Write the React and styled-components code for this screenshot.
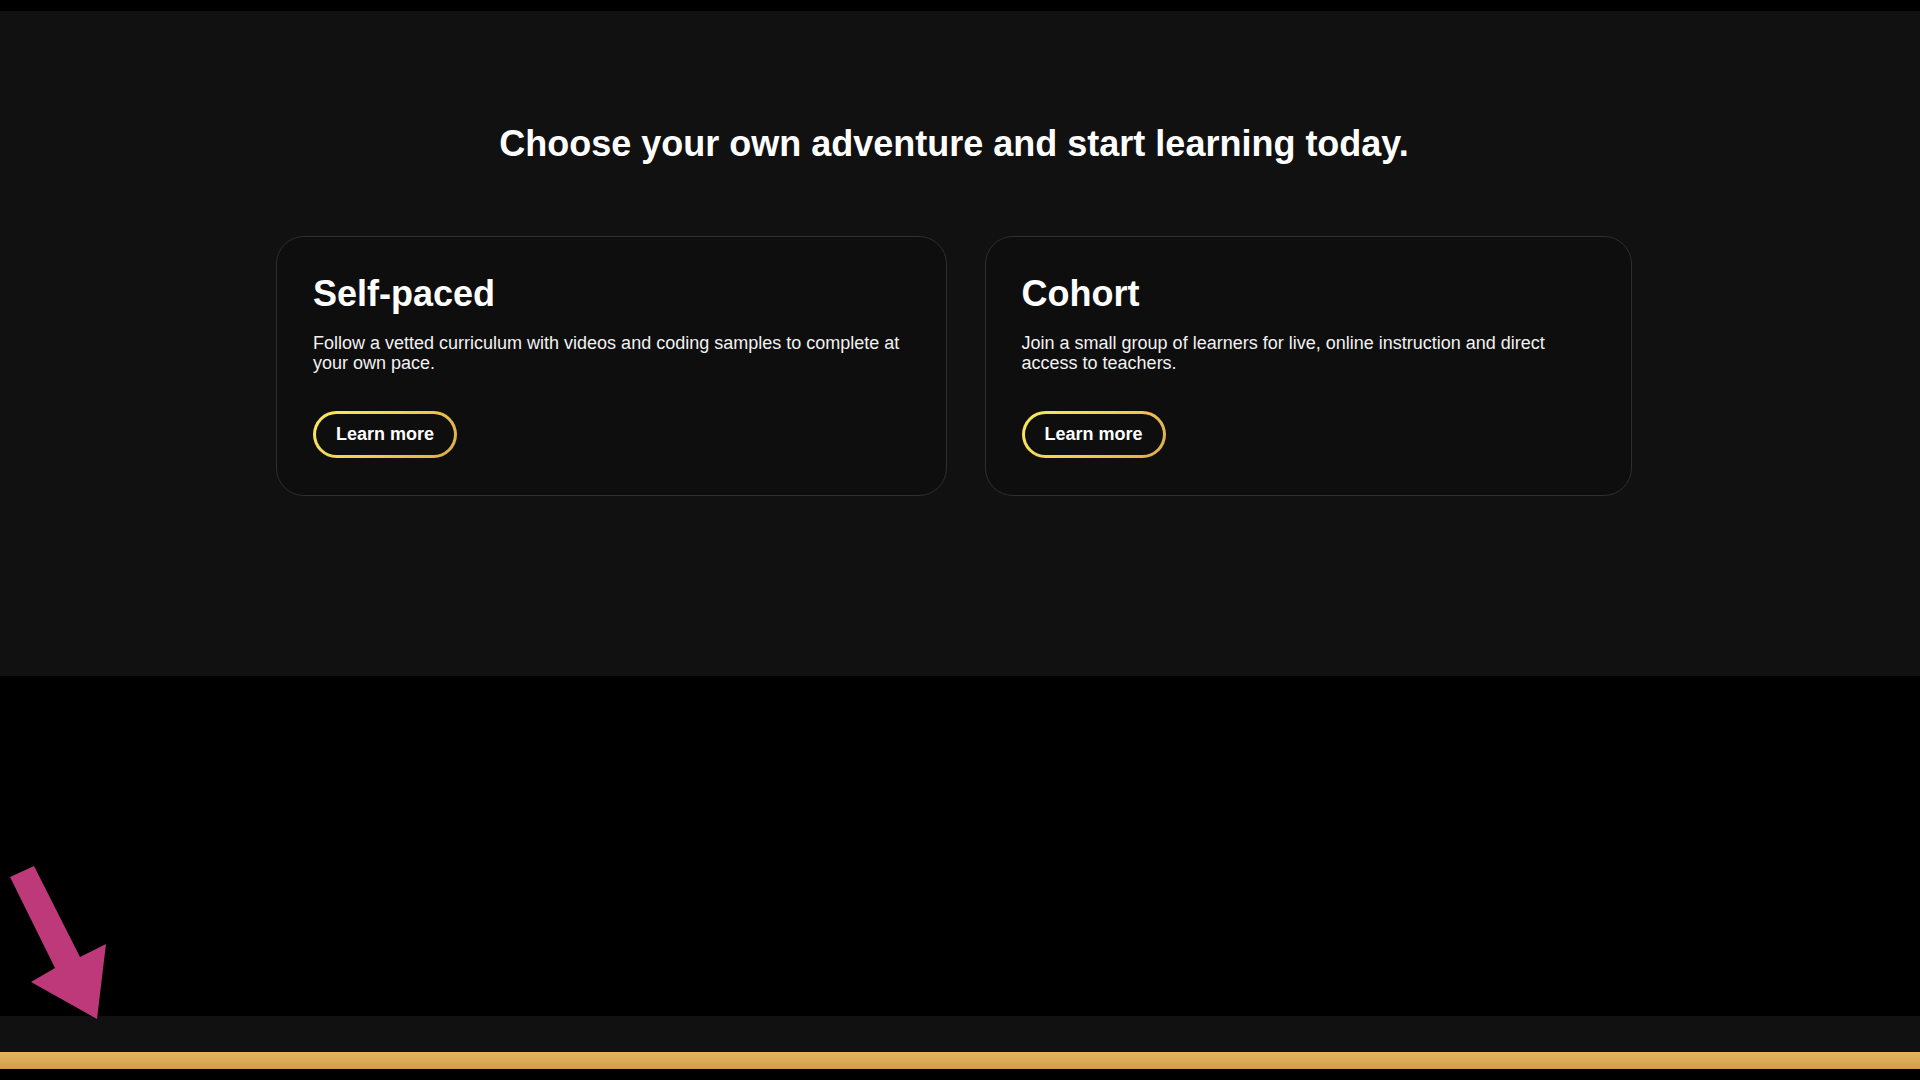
import React from "react";
import styled, { createGlobalStyle } from "styled-components";

const GlobalStyle = createGlobalStyle`
  html, body {
    margin: 0;
    padding: 0;
    background-color: #000;
  }

  body {
    font-family: "Liberation Sans", Helvetica, Arial, sans-serif;
    color: #fff;
  }
`;

const Page = styled.div`
  position: relative;
  height: 1080px;
  display: flex;
  flex-direction: column;
  overflow: hidden;
`;

const TopBar = styled.div`
  height: 11px;
  background-color: #000;
`;

const ChooseSection = styled.section`
  height: 665px;
  box-sizing: border-box;
  padding-top: 112px;
  background-color: #111;
`;

const Container = styled.div`
  width: 1356px;
  margin-left: calc(50% - 684px);
`;

const Heading = styled.h1`
  margin: 0 0 72px;
  text-align: center;
  font-size: 36px;
  line-height: 1.15;
  font-weight: 700;
  color: #fff;
`;

const CardRow = styled.div`
  display: flex;
  gap: 38px;
`;

const Card = styled.div`
  flex: ${(p) => p.$weight} 1 0;
  min-width: 0;
  display: flex;
  flex-direction: column;
  align-items: flex-start;
  padding: 36px 36px 37px;
  background-color: #0e0e0e;
  border: 1px solid #2f2f2f;
  border-radius: 28px;
`;

const CardTitle = styled.h2`
  margin: 0 0 18px;
  font-size: 36px;
  line-height: 1.15;
  font-weight: 700;
  color: #fff;
`;

const CardText = styled.p`
  margin: 0 0 38px;
  font-size: 18px;
  line-height: 20px;
  color: #f2f2f2;
`;

const LearnButton = styled.button`
  padding: 10px 20px;
  font-family: inherit;
  font-size: 18px;
  line-height: 21px;
  font-weight: 700;
  color: #fff;
  border: 3px solid transparent;
  border-radius: 999px;
  background: linear-gradient(#0e0e0e, #0e0e0e) padding-box,
    linear-gradient(135deg, #fbe95e 0%, #f0cf55 50%, #dfa94a 100%) border-box;
  cursor: pointer;
`;

const BlackGap = styled.div`
  height: 340px;
  background-color: #000;
`;

const FooterStrip = styled.div`
  height: 36px;
  background-color: #111;
`;

const GoldBar = styled.div`
  height: 17px;
  background: linear-gradient(180deg, #e5b55d 0%, #d8a953 55%, #cc9d49 100%);
`;

const BottomEdge = styled.div`
  flex: 1;
  background-color: #000;
`;

const Arrow = styled.svg`
  position: absolute;
  left: 0;
  top: 860px;
  width: 110px;
  height: 165px;
`;

const paths = [
  {
    title: "Self-paced",
    text: "Follow a vetted curriculum with videos and coding samples to complete at your own pace.",
    weight: 672,
  },
  {
    title: "Cohort",
    text: "Join a small group of learners for live, online instruction and direct access to teachers.",
    weight: 646,
  },
];

export default function App() {
  return (
    <>
      <GlobalStyle />
      <Page>
        <TopBar />
        <ChooseSection>
          <Container>
            <Heading>Choose your own adventure and start learning today.</Heading>
            <CardRow>
              {paths.map((path) => (
                <Card key={path.title} $weight={path.weight}>
                  <CardTitle>{path.title}</CardTitle>
                  <CardText>{path.text}</CardText>
                  <LearnButton>Learn more</LearnButton>
                </Card>
              ))}
            </CardRow>
          </Container>
        </ChooseSection>
        <BlackGap />
        <FooterStrip />
        <GoldBar />
        <BottomEdge />
        <Arrow viewBox="0 0 110 165">
          <polygon
            points="10,17 34,6 80,97 106,84 97,159 31,122 55,108"
            fill="#bd3979"
          />
        </Arrow>
      </Page>
    </>
  );
}
